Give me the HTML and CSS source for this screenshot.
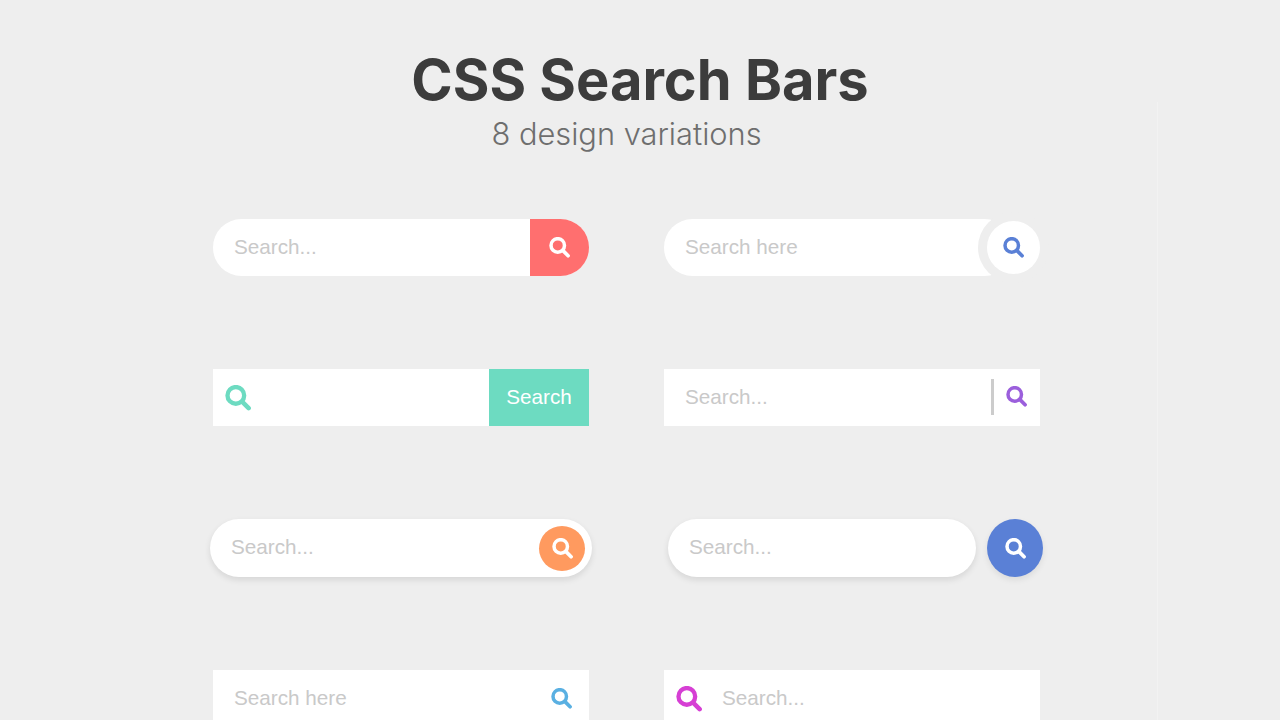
FILE: index.html
```html
<!DOCTYPE html>
<html lang="en">
<head>
  <meta charset="UTF-8">
  <title>CSS Search Bars</title>
  <link rel="stylesheet" href="styles.css">
</head>
<body>
<svg class="defs" width="0" height="0">
  <symbol id="search" viewBox="0 0 24 24">
    <circle cx="10" cy="9.6" r="7.7" fill="none" stroke="currentColor" stroke-width="4"/>
    <line x1="16" y1="15.6" x2="21.8" y2="21.4" stroke="currentColor" stroke-width="4.2" stroke-linecap="round"/>
  </symbol>
</svg>
<div class="edge"></div>
<div class="page">
  <h1 class="title">CSS Search Bars</h1>
  <p class="subtitle">8 design variations</p>

  <div class="bars">
    <!-- 1 -->
    <div class="bar pill one">
      <input type="text" placeholder="Search...">
      <button class="btn"><svg class="ico"><use href="#search"/></svg></button>
    </div>
    <!-- 2 -->
    <div class="two">
      <div class="bar pill">
        <input type="text" placeholder="Search here">
      </div>
      <button class="btn"><svg class="ico"><use href="#search"/></svg></button>
    </div>
    <!-- 3 -->
    <div class="bar three">
      <svg class="ico"><use href="#search"/></svg>
      <input type="text">
      <button class="btn">Search</button>
    </div>
    <!-- 4 -->
    <div class="bar four">
      <input type="text" placeholder="Search...">
      <button class="btn"><svg class="ico"><use href="#search"/></svg></button>
    </div>
    <!-- 5 -->
    <div class="bar pill five">
      <input type="text" placeholder="Search...">
      <button class="btn"><svg class="ico"><use href="#search"/></svg></button>
    </div>
    <!-- 6 -->
    <div class="six">
      <div class="bar pill">
        <input type="text" placeholder="Search...">
      </div>
      <button class="btn"><svg class="ico"><use href="#search"/></svg></button>
    </div>
    <!-- 7 -->
    <div class="bar seven">
      <input type="text" placeholder="Search here">
      <svg class="ico"><use href="#search"/></svg>
    </div>
    <!-- 8 -->
    <div class="bar eight">
      <svg class="ico"><use href="#search"/></svg>
      <input type="text" placeholder="Search...">
    </div>
  </div>
</div>
</body>
</html>
```

FILE: styles.css
```css
* {
  margin: 0;
  padding: 0;
  box-sizing: border-box;
}

html, body {
  height: 720px;
  overflow: hidden;
}

body {
  background-color: #eee;
  font-family: "Liberation Sans", Arial, sans-serif;
  position: relative;
}

.defs {
  position: absolute;
}

/* faint line on the right of the page */
.edge {
  position: absolute;
  top: 102px;
  left: 1157px;
  bottom: 0;
  width: 1px;
  background-color: #f2f2f2;
}

.page {
  width: 1253px;
  padding-top: 45px;
}

.title {
  font-family: Inter, sans-serif;
  font-size: 56px;
  line-height: 70px;
  font-weight: 700;
  color: #3c3c3c;
  text-align: center;
  padding-left: 27px;
}

.subtitle {
  font-family: Inter, sans-serif;
  font-size: 30.8px;
  line-height: 38px;
  font-weight: 300;
  color: #6e6e6e;
  text-align: center;
}

.bars {
  width: 827px;
  margin: 66px auto 0;
  display: grid;
  grid-template-columns: 376px 376px;
  grid-template-rows: 57px 57px 58px 57px;
  column-gap: 75px;
  row-gap: 93px;
}

.bar {
  display: flex;
  align-items: center;
  height: 57px;
  background-color: #fff;
}

.pill {
  border-radius: 29px;
}

.bar input {
  flex: 1;
  min-width: 0;
  height: 100%;
  border: 0;
  outline: 0;
  background: transparent;
  padding: 0 0 2px 21px;
  font-family: inherit;
  font-size: 20.7px;
}

.bar input::placeholder {
  color: #c9c9c9;
  opacity: 1;
}

.btn {
  flex: none;
  display: flex;
  align-items: center;
  justify-content: center;
  border: 0;
  font-family: inherit;
}

.ico {
  display: block;
  flex: none;
  width: 21px;
  height: 21px;
}

/* 1 */
.one .btn {
  width: 59px;
  height: 57px;
  background-color: #ff6f6f;
  color: #fff;
  border-radius: 0 29px 29px 0;
}

/* 2 */
.two {
  position: relative;
}

.two .bar {
  width: 349px;
}

.two .btn {
  position: absolute;
  top: 2px;
  right: 0;
  width: 53px;
  height: 53px;
  border-radius: 50%;
  background-color: #fff;
  color: #5a80d6;
  box-shadow: 0 0 0 9px #eee;
}

/* 3 */
.three {
  color: #6ddbc1;
}

.three .ico {
  width: 26px;
  height: 26px;
  margin-left: 12px;
}

.three .btn {
  width: 100px;
  height: 57px;
  padding-bottom: 2px;
  background-color: #6ddbc1;
  color: #fff;
  font-size: 20.7px;
}

/* 4 */
.four .btn {
  width: 49px;
  height: 36px;
  margin-bottom: 2px;
  justify-content: flex-start;
  padding-left: 12px;
  background-color: #fff;
  border-left: 3px solid #ccc;
  color: #9b5fdc;
}

/* 5 */
.five {
  height: 58px;
  margin: 0 -3px;
  box-shadow: 0 3px 6px rgba(0, 0, 0, 0.1);
}

.five .btn {
  width: 46px;
  height: 45px;
  margin-right: 7px;
  border-radius: 50%;
  background-color: #ff9a5f;
  color: #fff;
}

/* 6 */
.six {
  display: flex;
  align-items: center;
  gap: 11px;
  margin: 0 -3px 0 4px;
}

.six .bar {
  flex: 1;
  height: 58px;
  box-shadow: 0 3px 6px rgba(0, 0, 0, 0.1);
}

.six .btn {
  width: 56px;
  height: 58px;
  border-radius: 50%;
  background-color: #5a80d6;
  color: #fff;
  box-shadow: 0 3px 6px rgba(0, 0, 0, 0.08);
}

/* 7 */
.seven {
  color: #5ab0e2;
}

.seven .ico {
  margin-right: 17px;
}

/* 8 */
.eight {
  color: #d63fd4;
}

.eight .ico {
  width: 26px;
  height: 26px;
  margin-left: 12px;
}

.eight input {
  padding-left: 20px;
}
```
